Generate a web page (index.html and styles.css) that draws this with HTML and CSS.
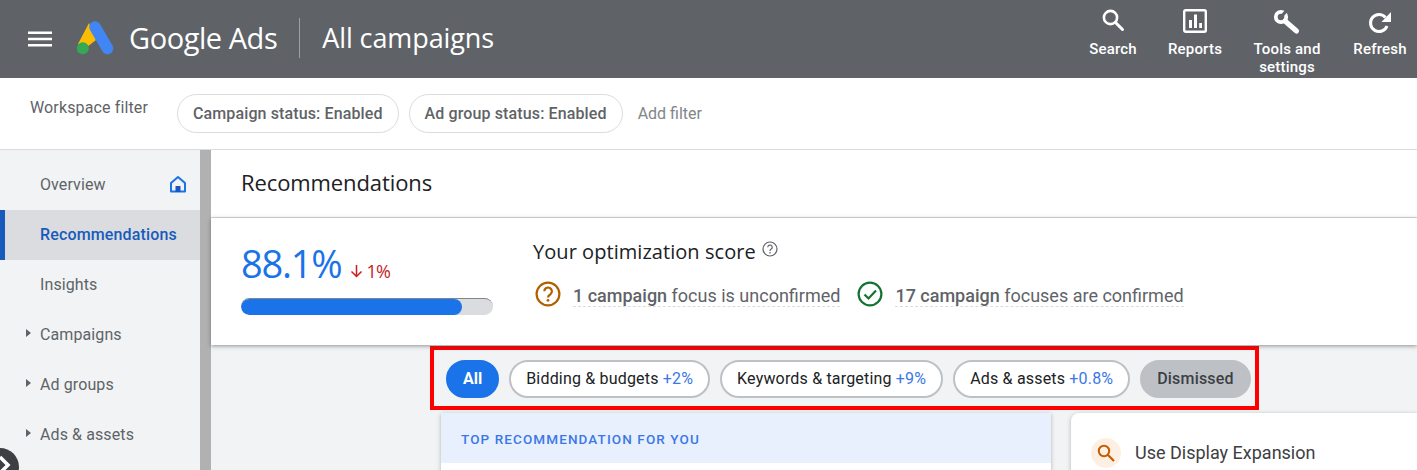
FILE: index.html
```html
<!DOCTYPE html>
<html lang="en">

<head>
    <meta charset="UTF-8">
    <meta name="viewport" content="width=device-width, initial-scale=1.0">
    <title>Recommendations - Google Ads</title>
    <link rel="stylesheet" href="styles.css">
</head>

<body>
    <!-- Top bar -->
    <header class="topbar">
        <svg class="menu-icon" width="24" height="18" viewBox="0 0 24 18">
            <path d="M0 1.500h24v2.600H0zM0 7.700h24v2.600H0zM0 13.900h24v2.600H0z" fill="#fff" />
        </svg>
        <svg class="ads-logo" width="38" height="34" viewBox="0 0 38 34">
            <polygon points="12,2 19,19 10,26 1,23" fill="#fbbc04" />
            <path d="M18 6 L30.500 27.500" stroke="#4285f4" stroke-width="11.500" stroke-linecap="round" fill="none" />
            <circle cx="5.800" cy="27.300" r="6" fill="#34a853" />
        </svg>
        <span class="brand">Google Ads</span>
        <span class="brand-divider"></span>
        <span class="page-scope">All campaigns</span>
        <nav class="top-actions">
            <a class="top-action action-search">
                <svg width="28" height="28" viewBox="0 0 28 28">
                    <circle cx="11.500" cy="10.500" r="6.600" fill="none" stroke="#fff" stroke-width="2.600" />
                    <path d="M16.500 15.500l7 7" stroke="#fff" stroke-width="3" stroke-linecap="round" />
                </svg>
                <span>Search</span>
            </a>
            <a class="top-action action-reports">
                <svg width="28" height="28" viewBox="0 0 28 28">
                    <rect x="3.200" y="3.200" width="21.600" height="21.600" rx="1.500" fill="none" stroke="#fff" stroke-width="2.400" />
                    <path d="M8 13h3v8H8zM13 7.500h3V21h-3zM18.200 16h2.800v5h-2.800z" fill="#fff" />
                </svg>
                <span>Reports</span>
            </a>
            <a class="top-action action-tools">
                <svg width="28" height="28" viewBox="0 0 28 28">
                    <circle cx="8" cy="10" r="5.200" fill="none" stroke="#fff" stroke-width="3.800" />
                    <path d="M12 14l11.500 10" stroke="#fff" stroke-width="5" stroke-linecap="round" />
                    <path d="M8.500 9.500L15 2" stroke="#5f6368" stroke-width="3.200" />
                </svg>
                <span>Tools and settings</span>
            </a>
            <a class="top-action action-refresh">
                <svg width="28" height="28" viewBox="0 0 28 28">
                    <path d="M19.500 10.500A8.500 8.500 0 1 0 21 19" fill="none" stroke="#fff" stroke-width="3" />
                    <path d="M25 5v10h-9.500z" fill="#fff" />
                </svg>
                <span>Refresh</span>
            </a>
        </nav>
    </header>

    <!-- Workspace filter -->
    <section class="filterbar">
        <span class="filter-label">Workspace filter</span>
        <span class="filter-chip">Campaign status: Enabled</span>
        <span class="filter-chip">Ad group status: Enabled</span>
        <span class="add-filter">Add filter</span>
    </section>

    <div class="layout">
        <aside class="sidebar">
            <a class="nav-item">Overview
                <svg class="home-icon" width="18" height="18" viewBox="0 0 18 18">
                    <path d="M9 2l7 6v8.500H2V8z" fill="none" stroke="#1a73e8" stroke-width="2" stroke-linejoin="round" />
                    <path d="M6.500 11h5v6h-5z" fill="#1a56c4" />
                </svg>
            </a>
            <a class="nav-item active">Recommendations</a>
            <a class="nav-item">Insights</a>
            <a class="nav-item has-children">Campaigns</a>
            <a class="nav-item has-children">Ad groups</a>
            <a class="nav-item has-children">Ads &amp; assets</a>
        </aside>
        <div class="side-strip"></div>

        <main class="content">
            <div class="page-title">Recommendations</div>

            <section class="score-panel">
                <div class="score-left">
                    <div class="score-line">
                        <span class="score-value">88.1%</span>
                        <svg class="down-arrow" width="13" height="14" viewBox="0 0 13 14">
                            <path d="M6.500 1v11.500M1.500 7.500l5 5 5-5" fill="none" stroke="#c5221f" stroke-width="1.500" />
                        </svg>
                        <span class="score-change">1%</span>
                    </div>
                    <div class="score-bar">
                        <div class="score-fill"></div>
                    </div>
                </div>
                <div class="score-right">
                    <div class="score-title">Your optimization score
                        <svg class="help-icon" width="18" height="18" viewBox="0 0 18 18">
                            <circle cx="9" cy="9" r="7" fill="none" stroke="#5f6368" stroke-width="1.200" />
                            <path d="M6.800 7.200a2.200 2.200 0 1 1 3.400 1.900c-.8.500-1.200.9-1.200 1.800" fill="none" stroke="#5f6368" stroke-width="1.200" />
                            <circle cx="9" cy="12.800" r=".8" fill="#5f6368" />
                        </svg>
                    </div>
                    <div class="focus-row">
                        <svg width="26" height="26" viewBox="0 0 26 26">
                            <circle cx="13" cy="13" r="11.400" fill="none" stroke="#b06000" stroke-width="2.200" />
                            <path d="M9.300 10.300a3.800 3.800 0 1 1 5.900 3.200c-1.300.8-2.200 1.500-2.200 3" fill="none" stroke="#b06000" stroke-width="2.200" />
                            <circle cx="13" cy="19.300" r="1.400" fill="#b06000" />
                        </svg>
                        <span class="focus-text"><b>1 campaign</b> focus is unconfirmed</span>
                        <svg class="check-icon" width="26" height="26" viewBox="0 0 26 26">
                            <circle cx="13" cy="13" r="11.400" fill="none" stroke="#137333" stroke-width="2.200" />
                            <path d="M7.500 13.500l4 4 7.500-8" fill="none" stroke="#137333" stroke-width="2.200" />
                        </svg>
                        <span class="focus-text"><b>17 campaign</b> focuses are confirmed</span>
                    </div>
                </div>
            </section>

            <div class="chips-row">
                <div class="chips-box">
                    <span class="chip chip-selected">All</span>
                    <span class="chip">Bidding &amp; budgets <em>+2%</em></span>
                    <span class="chip">Keywords &amp; targeting <em>+9%</em></span>
                    <span class="chip">Ads &amp; assets <em>+0.8%</em></span>
                    <span class="chip chip-dismissed">Dismissed</span>
                </div>
            </div>

            <div class="cards">
                <div class="card card-top">
                    <div class="card-head">TOP RECOMMENDATION FOR YOU</div>
                </div>
                <div class="card card-side">
                    <span class="rec-icon">
                        <svg width="20" height="20" viewBox="0 0 20 20">
                            <circle cx="8" cy="8" r="5.200" fill="none" stroke="#c25e00" stroke-width="2" />
                            <path d="M12 12l6 6" stroke="#c25e00" stroke-width="2.200" />
                        </svg>
                    </span>
                    <span class="rec-title">Use Display Expansion</span>
                </div>
            </div>
        </main>
    </div>

    <!-- round expand button clipped by the window -->
    <div class="expand-btn">
        <svg width="19" height="22" viewBox="0 0 19 22">
            <path d="M0 3l8 8-8 8" fill="none" stroke="#fff" stroke-width="3.500" />
        </svg>
    </div>
</body>

</html>
```

FILE: styles.css
```css
* {
    box-sizing: border-box;
}

body {
    margin: 0;
    height: 470px;
    overflow: hidden;
    position: relative;
    font-family: Roboto, Arial, sans-serif;
    background-color: #f1f3f4;
    color: #5f6368;
}

.topbar {
    height: 78px;
    background-color: #5f6368;
    color: #fff;
    display: flex;
    align-items: center;
    padding-left: 28px;
}

.menu-icon {
    margin-right: 25px;
}

.ads-logo {
    margin-right: 14px;
    margin-top: -3px;
}

.brand {
    font-family: "Open Sans", Arial, sans-serif;
    font-size: 29px;
    letter-spacing: -0.45px;
    white-space: nowrap;
    margin-top: -3px;
}

.brand-divider {
    width: 1px;
    height: 40px;
    background-color: #9aa0a6;
    margin: 0 22px;
    margin-top: -3px;
}

.page-scope {
    font-family: "Open Sans", Arial, sans-serif;
    font-size: 27px;
    letter-spacing: -0.1px;
    white-space: nowrap;
    margin-top: -3px;
}

.top-actions {
    margin-left: auto;
    display: flex;
    height: 78px;
}

.top-action {
    display: flex;
    flex-direction: column;
    align-items: center;
    padding-top: 7px;
    font-size: 15px;
    font-weight: 500;
    letter-spacing: 0.2px;
    line-height: 18px;
    text-align: center;
}

.top-action svg {
    margin-bottom: 5px;
}

.action-search {
    width: 50px;
    margin-right: 29px;
}

.action-reports {
    width: 56px;
    margin-right: 27px;
}

.action-tools {
    width: 74px;
    margin-right: 28px;
}

.action-refresh {
    width: 56px;
    margin-right: 9px;
}

.filterbar {
    height: 72px;
    background-color: #fff;
    border-bottom: 1px solid #dadce0;
    display: flex;
    align-items: center;
    padding: 0 0 1px 30px;
    font-size: 16px;
}

.filter-label {
    width: 147px;
    margin-top: -12px;
    letter-spacing: 0.13px;
    white-space: nowrap;
}

.filter-chip {
    height: 39px;
    line-height: 37px;
    padding: 0 15px;
    margin-right: 10px;
    border: 1px solid #dadce0;
    border-radius: 20px;
    font-weight: 500;
    font-size: 16px;
    letter-spacing: 0.12px;
    white-space: nowrap;
}

.add-filter {
    margin-left: 5px;
    color: #80868b;
}

.layout {
    display: flex;
    height: 320px;
}

.sidebar {
    width: 200px;
    flex-shrink: 0;
    padding-top: 10px;
    background-color: #f1f3f4;
}

.side-strip {
    width: 11px;
    flex-shrink: 0;
    background-color: #b1b1b1;
}

.nav-item {
    height: 50px;
    display: flex;
    align-items: center;
    justify-content: space-between;
    padding: 0 13px 2px 40px;
    font-size: 16px;
    letter-spacing: 0.1px;
    color: #5f6368;
    position: relative;
}

.nav-item.active {
    background-color: #dadce0;
    color: #185abc;
    font-weight: 500;
    letter-spacing: 0.15px;
    border-left: 5px solid #185abc;
    padding-left: 35px;
}

.nav-item.has-children::before {
    content: "";
    position: absolute;
    left: 26px;
    top: 19px;
    border-left: 5px solid #5f6368;
    border-top: 4px solid transparent;
    border-bottom: 4px solid transparent;
}

.content {
    flex: 1;
    min-width: 0;
}

.page-title {
    height: 68px;
    background-color: #fff;
    border-bottom: 1px solid #dadce0;
    padding: 17px 0 0 30px;
    font-family: "Open Sans", Arial, sans-serif;
    font-size: 22px;
    letter-spacing: -0.1px;
    color: #202124;
}

.score-panel {
    height: 127px;
    background-color: #fff;
    box-shadow: 0 1px 4px rgba(60, 64, 67, 0.55);
    display: flex;
    position: relative;
    padding: 20px 0 0 30px;
}

.score-left {
    width: 252px;
    margin-right: 40px;
}

.score-line {
    display: flex;
    align-items: baseline;
    height: 60px;
    color: #1a73e8;
}

.score-value {
    font-family: "Open Sans", Arial, sans-serif;
    font-size: 38px;
    letter-spacing: -1.2px;
    line-height: 50px;
}

.down-arrow {
    margin-left: 8px;
}

.score-change {
    font-family: "Open Sans", Arial, sans-serif;
    font-size: 18px;
    letter-spacing: -0.8px;
    margin-left: 4px;
    margin-top: -1px;
    color: #c5221f;
}

.score-bar {
    height: 17px;
    background-color: #dadce0;
    border-top: 1px solid #80868b;
    border-radius: 9px;
    overflow: hidden;
}

.score-fill {
    width: 221px;
    height: 16px;
    background-color: #1a73e8;
    border-radius: 8px;
}

.score-right {
    margin-top: -2px;
}

.score-title {
    display: flex;
    align-items: center;
    gap: 5px;
    height: 30px;
    font-family: "Open Sans", Arial, sans-serif;
    font-size: 20px;
    letter-spacing: 0.05px;
    color: #202124;
}

.help-icon {
    margin-top: -4px;
}

.focus-row {
    display: flex;
    align-items: center;
    margin-top: 15px;
    margin-left: 2px;
}

.focus-text {
    margin: 4px 0 0 12px;
    font-size: 18px;
    line-height: 21px;
    border-bottom: 1px dashed #dadce0;
    white-space: nowrap;
}

.focus-text b {
    font-weight: 500;
}

.check-icon {
    margin-left: 17px;
}

.chips-row {
    height: 65px;
    padding: 1px 0 0 219px;
}

.chips-box {
    width: 829px;
    height: 64px;
    border: 4px solid #ff0000;
    display: flex;
    align-items: center;
    gap: 10px;
    padding: 2px 0 0 12px;
}

.chip {
    height: 38px;
    line-height: 34px;
    padding: 0 15px;
    background-color: #fff;
    border: 2px solid #bdc1c6;
    border-radius: 19px;
    font-size: 16px;
    letter-spacing: 0.18px;
    color: #202124;
    white-space: nowrap;
}

.chip em {
    font-style: normal;
    color: #3b78e7;
}

.chip-selected {
    background-color: #1a73e8;
    border-color: #1a73e8;
    color: #fff;
    font-weight: 700;
    letter-spacing: 0;
}

.chip-dismissed {
    background-color: #bdc1c6;
    border-color: #bdc1c6;
    font-weight: 500;
    color: #3c4043;
}

.cards {
    display: flex;
    gap: 20px;
    padding: 3px 0 0 230px;
}

.card {
    height: 60px;
    background-color: #fff;
    box-shadow: 0 1px 4px rgba(60, 64, 67, 0.35);
}

.card-top {
    width: 610px;
    flex-shrink: 0;
}

.card-head {
    height: 50px;
    background-color: #e8f0fe;
    padding: 18px 0 0 20px;
    font-size: 13.500px;
    font-weight: 500;
    letter-spacing: 1.1px;
    line-height: 16px;
    color: #3b78e7;
    white-space: nowrap;
}

.card-side {
    flex: 1;
    border-radius: 8px 0 0 0;
    display: flex;
    align-items: flex-start;
    padding: 25px 0 0 20px;
}

.rec-icon {
    width: 30px;
    height: 30px;
    border-radius: 50%;
    background-color: #feefe3;
    display: flex;
    align-items: center;
    justify-content: center;
    margin-right: 14px;
}

.rec-title {
    font-size: 18px;
    line-height: 30px;
    color: #3c4043;
}

.expand-btn {
    position: absolute;
    left: -19px;
    top: 448px;
    width: 38px;
    height: 38px;
    border-radius: 50%;
    background-color: #3c4043;
    padding: 6px 0 0 19px;
}
```
